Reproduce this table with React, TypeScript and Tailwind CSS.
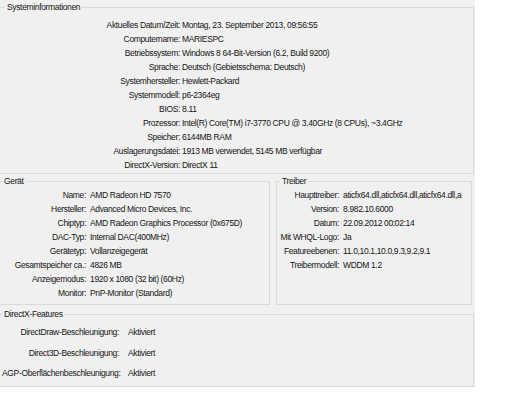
import React from 'react'
import { twMerge } from 'tailwind-merge'
import clsx, { type ClassValue } from 'clsx'

const cn = (...inputs: ClassValue[]) => twMerge(clsx(inputs))

type Row = [string, string]

const sysInfo: Row[] = [
  ['Aktuelles Datum/Zeit:', 'Montag, 23. September 2013, 09:56:55'],
  ['Computername:', 'MARIESPC'],
  ['Betriebssystem:', 'Windows 8 64-Bit-Version (6.2, Build 9200)'],
  ['Sprache:', 'Deutsch (Gebietsschema: Deutsch)'],
  ['Systemhersteller:', 'Hewlett-Packard'],
  ['Systemmodell:', 'p6-2364eg'],
  ['BIOS:', '8.11'],
  ['Prozessor:', 'Intel(R) Core(TM) i7-3770 CPU @ 3.40GHz (8 CPUs), ~3.4GHz'],
  ['Speicher:', '6144MB RAM'],
  ['Auslagerungsdatei:', '1913 MB verwendet, 5145 MB verfügbar'],
  ['DirectX-Version:', 'DirectX 11'],
]

const device: Row[] = [
  ['Name:', 'AMD Radeon HD 7570'],
  ['Hersteller:', 'Advanced Micro Devices, Inc.'],
  ['Chiptyp:', 'AMD Radeon Graphics Processor (0x675D)'],
  ['DAC-Typ:', 'Internal DAC(400MHz)'],
  ['Gerätetyp:', 'Vollanzeigegerät'],
  ['Gesamtspeicher ca.:', '4826 MB'],
  ['Anzeigemodus:', '1920 x 1080 (32 bit) (60Hz)'],
  ['Monitor:', 'PnP-Monitor (Standard)'],
]

const driver: Row[] = [
  ['Haupttreiber:', 'aticfx64.dll,aticfx64.dll,aticfx64.dll,a'],
  ['Version:', '8.982.10.6000'],
  ['Datum:', '22.09.2012 00:02:14'],
  ['Mit WHQL-Logo:', 'Ja'],
  ['Featureebenen:', '11.0,10.1,10.0,9.3,9.2,9.1'],
  ['Treibermodell:', 'WDDM 1.2'],
]

const features: Row[] = [
  ['DirectDraw-Beschleunigung:', 'Aktiviert'],
  ['Direct3D-Beschleunigung:', 'Aktiviert'],
  ['AGP-Oberflächenbeschleunigung:', 'Aktiviert'],
]

const Group = ({
  title,
  className,
  children,
}: {
  title: string
  className: string
  children: React.ReactNode
}) => {
  return (
    <fieldset className={cn('min-w-0 border border-[#dadada]', className)}>
      <legend className="px-[2px] leading-[14px]">{title}</legend>
      {children}
    </fieldset>
  )
}

const InfoGrid = ({
  rows,
  cols,
  rowClass,
}: {
  rows: Row[]
  cols: string
  rowClass: string
}) => {
  return (
    <div className={cn('grid', cols)}>
      {rows.map(([label, value]) => (
        <React.Fragment key={label}>
          <div className={cn('whitespace-nowrap text-right', rowClass)}>{label}</div>
          <div className={cn('overflow-hidden whitespace-nowrap', rowClass)}>{value}</div>
        </React.Fragment>
      ))}
    </div>
  )
}

const App = () => {
  return (
    <div className="h-[400px] w-[522px] bg-white font-['Liberation_Sans',Arial,sans-serif] text-[8.5px] tracking-[-0.35px] text-[#151515]">
      <div className="flex h-[387px] w-[475px] flex-col bg-[#f0f0f0] pr-[1px]">
        <Group title="Systeminformationen" className="border-l-0 px-[5px] pt-[4px] pb-[1px]">
          <InfoGrid
            rows={sysInfo}
            cols="grid-cols-[175px_1fr] gap-x-[2px]"
            rowClass="h-[14px] leading-[14px]"
          />
        </Group>

        <div className="flex gap-[6px] pr-[2px]">
          <Group title="Gerät" className="w-[270px] border-l-0 px-[2px] pb-[4px]">
            <InfoGrid
              rows={device}
              cols="grid-cols-[84px_1fr] gap-x-[4px]"
              rowClass="h-[14px] leading-[14px]"
            />
          </Group>
          <Group title="Treiber" className="flex-1 px-[3px] pb-[4px]">
            <InfoGrid
              rows={driver}
              cols="grid-cols-[59px_1fr] gap-x-[4px]"
              rowClass="h-[14px] leading-[14px]"
            />
          </Group>
        </div>

        <Group title="DirectX-Features" className="mt-[2px] flex-1 border-l-0 px-[2px] pt-[1px]">
          <InfoGrid
            rows={features}
            cols="grid-cols-[117px_1fr] gap-x-[9px]"
            rowClass="h-[20.5px] leading-[20.5px]"
          />
        </Group>
      </div>
    </div>
  )
}

export default App
